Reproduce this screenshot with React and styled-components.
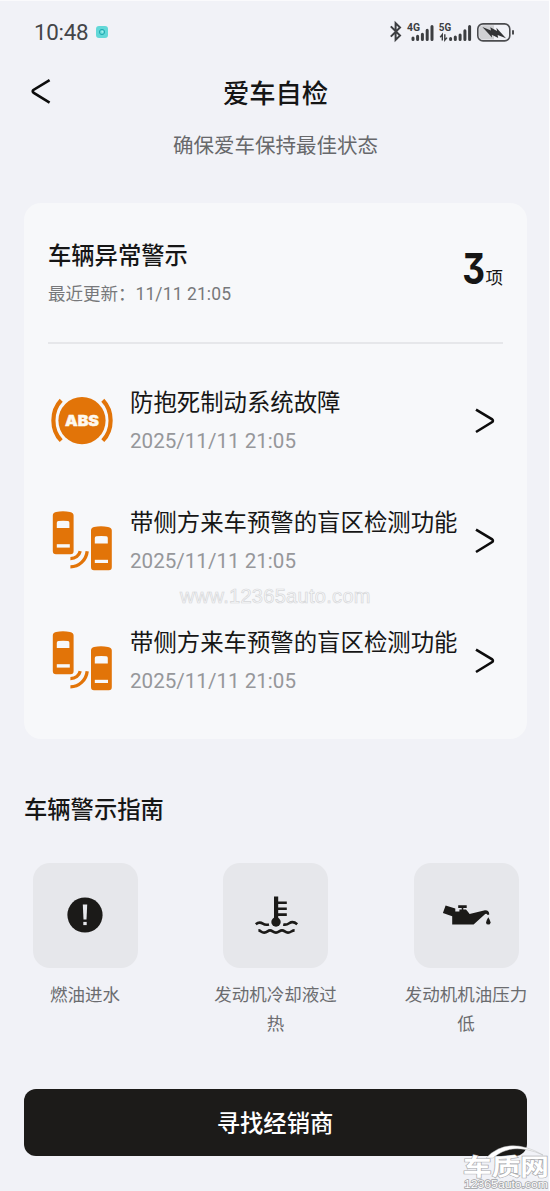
import React from 'react'
import styled, { createGlobalStyle } from 'styled-components';

const warnings = [
    { icon: 'abs', title: '防抱死制动系统故障', time: '2025/11/11 21:05' },
    { icon: 'blind', title: '带侧方来车预警的盲区检测功能', time: '2025/11/11 21:05' },
    { icon: 'blind', title: '带侧方来车预警的盲区检测功能', time: '2025/11/11 21:05' },
];

const AbsIcon = () => (
<svg width="64" height="64" viewBox="0 0 64 64">
    <circle cx="32" cy="31.6" r="23.6" fill="#e27408"/>
    <path d="M11.2 11.2C0.8 22 0.8 41 11.2 51.6M52.8 11.2C63.2 22 63.2 41 52.8 51.6" fill="none" stroke="#e27408" strokeWidth="4.2"/>
    <AbsText x="32" y="36.8" textAnchor="middle" textLength="34" lengthAdjust="spacingAndGlyphs">ABS</AbsText>
</svg>
);

const BlindSpotIcon = () => (
<svg width="64" height="64" viewBox="0 0 64 64">
    <g fill="#e27408">
        <path d="M2.8 6.5Q2.8 3.6 6 3Q13 1.6 20 3Q23.6 3.6 23.6 6.5V42Q23.6 45.2 20.6 45.2H6Q2.8 45.2 2.8 42Z"/>
        <path d="M41 21.5Q41 18.5 44 18Q51 16.7 58 18Q61.8 18.5 61.8 21.5V58Q61.8 61.2 58.8 61.2H44Q41 61.2 41 58Z"/>
    </g>
    <g fill="#f7f8fa">
        <path d="M6.8 19V13.7Q6.8 12.2 8.4 12Q13 11.4 18 12Q19.4 12.2 19.4 13.7V19Z"/>
        <path d="M6.8 35.2H19.8V38.6H6.8Z"/>
        <path d="M44.8 34.6V29Q44.8 27.5 46.4 27.3Q51 26.6 56.4 27.3Q57.8 27.5 57.8 29V34.6Z"/>
        <path d="M44.8 50.8H58V54H44.8Z"/>
    </g>
    <path d="M20.4 49.6C25.4 49.6 29.2 46.6 30.2 42.2M20.4 57.8C29 57.8 36.2 51.2 37.2 42.2" fill="none" stroke="#e27408" strokeWidth="3.3"/>
</svg>
);

const FuelIcon = () => (
<svg width="50" height="50" viewBox="0 0 50 50">
    <circle cx="25" cy="25" r="17.6" fill="#1b1a18"/>
    <path d="M22.8 14.4H27.2L26.5 29.4H23.5Z" fill="#e6e7eb"/>
    <path d="M23.3 31.9H26.7V35.1H23.3Z" fill="#e6e7eb"/>
</svg>
);

const CoolantIcon = () => (
<svg width="50" height="50" viewBox="0 0 50 50">
    <path d="M23 6.5H27.2V29H23Z" fill="#1b1a18"/>
    <circle cx="25" cy="32" r="4.7" fill="#1b1a18"/>
    <g fill="none" stroke="#1b1a18" strokeWidth="2.6">
        <path d="M26 12.8H35.8M26 18.7H35.8M26 24.6H35.8"/>
        <path d="M4.8 34.2C7.4 32 9.4 32 11.8 33.6S15.8 35 18 34.4M32.2 34.4C34.4 35 36 34.7 38.2 33.2S43.6 32 46.2 34.2"/>
        <path d="M7.4 40.4C10 40.4 10 42.6 13.2 42.6S16.6 40.4 19 40.4S22 42.6 25 42.6S28.4 40.4 31 40.4S34 42.6 37 42.6S40.6 40.4 43.6 40.4"/>
    </g>
</svg>
);

const OilIcon = () => (
<svg width="50" height="50" viewBox="0 0 50 50">
    <g fill="#1b1a18">
        <path d="M4.6 15.4L14.3 18.6V21.4H18.4V19.5H20.7V18.1H17.2V15.3H25.7V18.1H22.3V19.5H25L26.9 21.7L28.6 24L44 20.3Q48.6 20.2 48.2 24.8H46.2Q45.8 23.2 44.2 24L32.6 34.6H11.2V26.2L1.9 23.1Z"/>
        <path d="M47.3 27.2Q49.6 31 49.6 32.4Q49.4 34.6 47.3 34.6Q45.2 34.6 45 32.4Q45 31 47.3 27.2Z"/>
    </g>
</svg>
);

const guides = [
    { label: '燃油进水', icon: <FuelIcon/> },
    { label: '发动机冷却液过热', icon: <CoolantIcon/> },
    { label: '发动机机油压力低', icon: <OilIcon/> },
];

const Arrow = ({ left }) => (
<svg width="20" height="28" viewBox="0 0 20 28">
    <path d={left ? 'M18.6 2.2L2.4 12Q1 13.3 2.4 14.6L18.6 24.6' : 'M1 2.6L17.2 12.4Q18.6 13.7 17.2 15L1 25'} fill="none" stroke="#0c0c0c" strokeWidth="2.6"/>
</svg>
);

// bluetooth, two signal meters and the charging battery
const StatusIcons = () => (
<svg width="128" height="28" viewBox="0 0 128 28">
    <path d="M0.8 8.4L10 17.6L5.6 21.8V5.2L10 9.4L0.8 18.6" fill="none" stroke="#3c3e41" strokeWidth="2"/>
    <NetText x="17" y="13.4" textLength="13" lengthAdjust="spacingAndGlyphs">4G</NetText>
    <NetText x="48.8" y="13.4" textLength="12.4" lengthAdjust="spacingAndGlyphs">5G</NetText>
    <g stroke="#3c3e41" strokeWidth="3" strokeLinecap="round">
        <path d="M23 20V21.6M27.6 18.2V21.6M32.4 16.2V21.6M37.2 12.2V21.6M42 8.4V21.6"/>
        <path d="M60.6 20.4V21.6M65.3 19V21.6M70.1 17V21.6M74.9 12.8V21.6M79.6 8.4V21.6"/>
    </g>
    <path d="M52.3 22.5V16.6L50.2 19.2M54.8 16.2V22.2L57 19.6" fill="none" stroke="#3c3e41" strokeWidth="1.4"/>
    <rect x="87.8" y="5.9" width="32" height="17" rx="5.2" fill="#f1f2f7" stroke="#4b4c4f" strokeWidth="1.6"/>
    <path d="M93 7.2H104V21.6H93Q89.2 21.6 89.2 17.4V11.4Q89.2 7.2 93 7.2Z" fill="#cfd0d3"/>
    <path d="M92.4 9L101 12.4L100.3 9.2L107 13L106.4 9.8L116 20.2L107.6 17L108.2 20L101.8 16.8L102 19.4Z" fill="#333436"/>
    <path d="M123 12.2V16.6" stroke="#4b4c4f" strokeWidth="2"/>
</svg>
);

const App = () => (
<Page>
    <GlobalStyle/>
    <StatusBar>
        <Clock>10:48</Clock>
        <svg width="12" height="12" viewBox="0 0 12 12">
            <rect width="12" height="12" rx="3" fill="#62d8d8"/>
            <circle cx="6" cy="6" r="2.6" fill="none" stroke="#23a9b1" strokeWidth="1"/>
            <circle cx="6.3" cy="5.8" r="1" fill="#a8f1ee"/>
        </svg>
        <StatusRight><StatusIcons/></StatusRight>
    </StatusBar>
    <Header>
        <Arrow left/>
        <Title>爱车自检</Title>
    </Header>
    <SubTitle>确保爱车保持最佳状态</SubTitle>
    <Card>
        <CardHead>
            <div>
                <Heading>车辆异常警示</Heading>
                <Updated>最近更新：<UpdatedTime>11/11 21:05</UpdatedTime></Updated>
            </div>
            <Count><CountNumber>3</CountNumber>项</Count>
        </CardHead>
        {warnings.map((w, i) => (
        <Row key={i}>
            {w.icon === 'abs' ? <AbsIcon/> : <BlindSpotIcon/>}
            <RowBody>
                <RowTitle>{w.title}</RowTitle>
                <RowTime>{w.time}</RowTime>
            </RowBody>
            <Arrow/>
        </Row>
        ))}
        <CenterMark>www.12365auto.com</CenterMark>
    </Card>
    <GuideHeading>车辆警示指南</GuideHeading>
    <Guides>
        {guides.map((g) => (
        <Guide key={g.label}>
            <Tile>{g.icon}</Tile>
            <GuideLabel>{g.label}</GuideLabel>
        </Guide>
        ))}
    </Guides>
    <DealerButton>寻找经销商</DealerButton>
    <CornerMark>
        <svg width="88" height="49" viewBox="0 0 88 49">
            <path d="M24 16Q46 -7 81 13Q50 -1 31 16Z" fill="#fff" stroke="#b9babd" strokeWidth="0.5"/>
            <MarkName x="1" y="33" textLength="86" lengthAdjust="spacingAndGlyphs">车质网</MarkName>
            <MarkUrl x="2" y="46.4" textLength="84" lengthAdjust="spacingAndGlyphs">12365auto.com</MarkUrl>
        </svg>
    </CornerMark>
</Page>
);

export default App

const GlobalStyle = createGlobalStyle`
    body {
        margin: 0;
        background-color: #f1f2f7;
    }
`

const Page = styled.div`
    position: relative;
    box-sizing: border-box;
    width: 550px;
    height: 1191px;
    padding: 0 22px 0 24px;
    overflow: hidden;
    border-top: 1px solid #fafafc;
    border-right: 1px solid #fdfdfe;
    background-color: #f1f2f7;
    color: #161616;
    font-family: "Noto Sans CJK SC", sans-serif;
`

const StatusBar = styled.div`
    display: flex;
    align-items: center;
    height: 61px;
    padding-left: 10px;
`

const Clock = styled.div`
    width: 62px;
    color: #444548;
    font-family: Roboto, sans-serif;
    font-size: 22.4px;
    letter-spacing: -0.3px;
`

const StatusRight = styled.div`
    display: flex;
    margin-left: auto;
    margin-right: 9px;
`

const Header = styled.div`
    display: flex;
    align-items: center;
    height: 59px;
    padding-left: 7px;
`

const Title = styled.div`
    flex: 1;
    margin-right: 27px;
    text-align: center;
    line-height: 40px;
    font-size: 26.3px;
    font-weight: 500;
`

const SubTitle = styled.div`
    height: 82px;
    line-height: 46px;
    text-align: center;
    color: #67686b;
    font-size: 20.5px;
`

const Card = styled.div`
    position: relative;
    box-sizing: border-box;
    height: 536px;
    padding: 0 24px;
    border-radius: 17px;
    background-color: #f7f8fa;
`

const CardHead = styled.div`
    display: flex;
    justify-content: space-between;
    box-sizing: border-box;
    height: 141px;
    margin-bottom: 17px;
    padding-top: 33px;
    border-bottom: 2px solid #e6e7ea;
`

const Heading = styled.div`
    line-height: 36px;
    font-size: 23.3px;
    font-weight: 500;
`

const Updated = styled.div`
    line-height: 42px;
    color: #77787b;
    font-size: 17.5px;
`

const UpdatedTime = styled.span`
    font-family: Roboto, sans-serif;
    letter-spacing: 0.1px;
`

const Count = styled.div`
    display: flex;
    align-items: baseline;
    height: 66px;
    line-height: 66px;
    font-size: 17.5px;
`

/* narrow digit with a flat top */
const CountNumber = styled.span`
    font-family: Inter, sans-serif;
    font-size: 42px;
    font-weight: 700;
    font-feature-settings: "cv09";
    transform: scaleX(0.84);
    transform-origin: right;
`

const Row = styled.div`
    display: flex;
    align-items: center;
    height: 120px;
    padding: 0 8px 0 2px;
`

const RowBody = styled.div`
    flex: 1;
    margin-left: 16px;
    white-space: nowrap;
`

const RowTitle = styled.div`
    line-height: 38px;
    font-size: 23.4px;
`

const RowTime = styled.div`
    padding-top: 1px;
    line-height: 40px;
    color: #96979a;
    font-family: Roboto, sans-serif;
    font-size: 20.6px;
`

const AbsText = styled.text`
    fill: #fdf9ef;
    stroke: #fdf9ef;
    stroke-width: 0.4px;
    font-family: Inter, sans-serif;
    font-size: 14px;
    font-weight: 900;
`

const NetText = styled.text`
    fill: #3c3e41;
    font-family: Roboto, sans-serif;
    font-size: 11.5px;
    font-weight: 700;
`

const CenterMark = styled.div`
    position: absolute;
    left: 156px;
    top: 382px;
    line-height: 22px;
    color: #f9fafb;
    font-family: "Liberation Sans", sans-serif;
    font-size: 20px;
    letter-spacing: 0.3px;
    -webkit-text-stroke: 0.7px #d6d7d9;
`

const GuideHeading = styled.div`
    height: 124px;
    line-height: 139px;
    font-size: 23.3px;
    font-weight: 500;
`

const Guides = styled.div`
    display: flex;
    justify-content: space-between;
    height: 226px;
    margin: 0 -4px;
`

const Guide = styled.div`
    display: flex;
    flex-direction: column;
    align-items: center;
    width: 130px;
`

const Tile = styled.div`
    display: flex;
    align-items: center;
    justify-content: center;
    box-sizing: border-box;
    width: 105px;
    height: 105px;
    margin-bottom: 11px;
    padding-bottom: 1px;
    border-radius: 17px;
    background-color: #e6e7eb;
`

const GuideLabel = styled.div`
    line-height: 29px;
    text-align: center;
    color: #6b6c6f;
    font-size: 17.5px;
`

const DealerButton = styled.button`
    display: block;
    width: 100%;
    height: 67px;
    padding: 0 1px 2px 0;
    border: 0;
    border-radius: 12px;
    background-color: #1c1b19;
    color: #fff;
    font-family: inherit;
    font-size: 23.3px;
    font-weight: 500;
`

const CornerMark = styled.div`
    position: absolute;
    right: -1px;
    bottom: 0;
    height: 49px;
`

const MarkName = styled.text`
    fill: #fff;
    stroke: #a9aaad;
    stroke-width: 1.2px;
    paint-order: stroke;
    font-size: 23px;
    font-weight: 700;
`

const MarkUrl = styled.text`
    fill: #fff;
    stroke: #a0a1a4;
    stroke-width: 1.4px;
    paint-order: stroke;
    font-family: "Liberation Sans", sans-serif;
    font-size: 11.5px;
`
